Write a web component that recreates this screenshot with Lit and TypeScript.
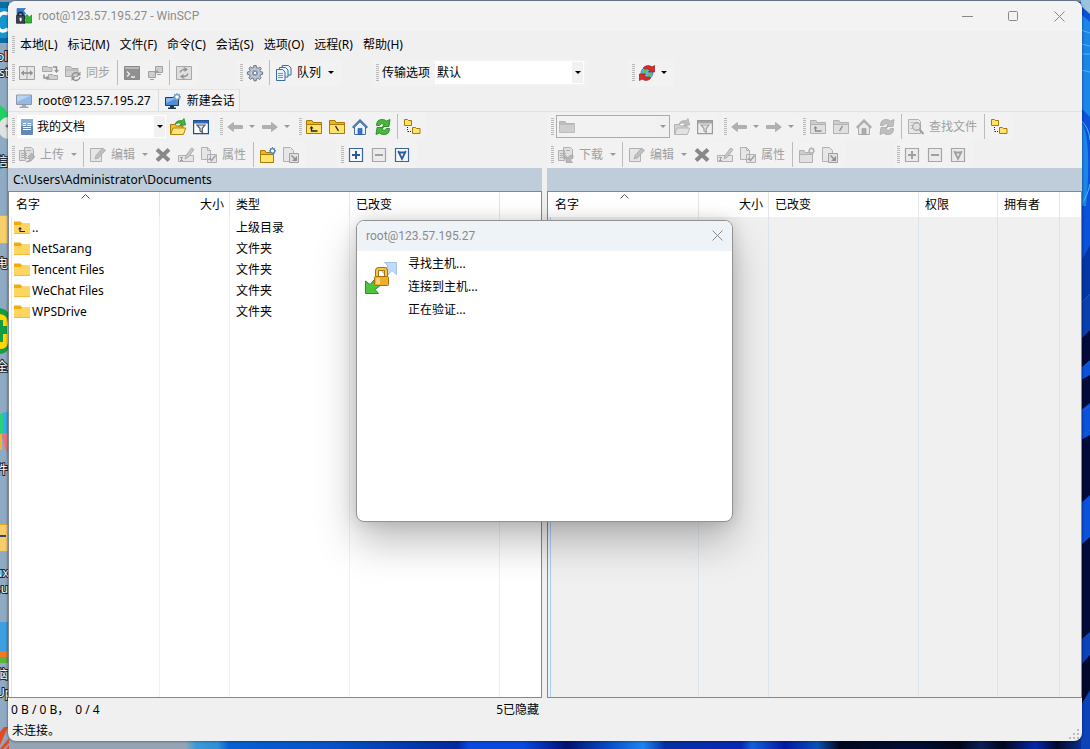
import { LitElement, html, css, svg, nothing } from "lit";
import { customElement, property } from "lit/decorators.js";

const shapes: Record<string, unknown> = {
  app: svg`<path fill="#2b7de0" stroke="#1c5fb5" stroke-width=".6" d="M1 .5h8.500L7.500 2.700 9.500 5.500 7.500 8 4.500 6 1 8z"/><path fill="#35b436" stroke="#167d1a" stroke-width=".7" d="M8 15h7.500V7L13.300 9.200 11 6.500 8 9.500 10.300 12z"/><path fill="none" stroke="#23293a" stroke-width="1.500" d="M2.200 8V6.500a2.300 2.300 0 0 1 4.600 0V8"/><rect x=".6" y="7.600" width="8" height="7.600" fill="#3a4356" stroke="#1c2333" stroke-width=".8"/><path fill="#fff" d="M3.600 9.800h2v1.400l-.4 2h-1.200l-.4-2z"/>`,
  columns: svg`<path fill="#eee" stroke="#555" d="M.5 1.500h15v13H.5zM8 1.500v13"/><path stroke="#333" stroke-width="1.600" d="M3 8h10"/><path fill="#333" d="M5 5.200v5.600L1.800 8zM11 5.200v5.600L14.200 8z"/>`,
  syncdirs: svg`<path fill="#bbb" stroke="#666" d="M.5 1.500h5l1 1H10v4H.500zM6.500 9.500h4l1 1h4v4h-9z"/><path fill="none" stroke="#333" stroke-width="1.500" d="M11 2h3.500v4M2 9.500V13h3"/><path fill="#333" d="M12 5h5l-2.500 3zM4.500 10.500v5L7.500 13z"/>`,
  syncgo: svg`<path fill="#bbb" stroke="#666" d="M.5 1.500h5l1.500 2h6v8H.500z"/><path stroke="#777" d="M1 5h12"/><path fill="none" stroke="#333" stroke-width="1.500" d="M7 11a4 4 0 0 1 7-2M15 12a4 4 0 0 1-7 2"/><path fill="#333" d="M15.500 6.500v4h-4zM6.500 16v-4h4z"/>`,
  console: svg`<path fill="#333" stroke="#222" d="M.5 1.500h15v13H.5z"/><path fill="#888" d="M1 2h14v2H1z"/><path fill="none" stroke="#fff" stroke-width="1.300" d="M3 6.500 5.500 9 3 11.500M7 12h4"/>`,
  putty: svg`<path fill="#bbb" stroke="#555" d="M8.500 1.500h7v6h-7zM1.500 6.500h7v6h-7zM10 9.500h4M3 14.500h4"/><path fill="#444" d="M12 3 7 8h2l-4 4 7-6h-2z"/>`,
  refreshbox: svg`<path fill="#ddd" stroke="#666" d="M.5 1.500h15v13H.5zM8 1.500v2M8 12.500v2"/><path fill="none" stroke="#444" stroke-width="1.500" d="M4 7.500q1-3 5-3M12 8.500q-1 3-5 3"/><path fill="#333" d="M8.500 2v5l3.500-2.500zM7.500 9v5L4 11.500z"/>`,
  gear: svg`<path fill="#b4c0cf" stroke="#5f6d80" stroke-width=".9" d="M6.800.6h2.400l.4 2 1.500.7L12.800 2l1.500 1.600-1.200 1.700.6 1.400 1.900.3v2.300l-2 .4-.6 1.500 1.200 1.700-1.600 1.600-1.700-1.200-1.400.6-.3 1.900H7l-.4-2-1.500-.6-1.700 1.200-1.600-1.600L3 11.100l-.6-1.400-2-.4V7l2-.4.7-1.500L1.900 3.400l1.600-1.600 1.700 1.200 1.300-.6z"/><circle cx="8" cy="8" r="3.700" fill="#8d9bae" stroke="#d9e0e8" stroke-width=".7"/><circle cx="8" cy="8" r="1.700" fill="#fff" stroke="#5f6d80" stroke-width=".6"/>`,
  queue: svg`<g fill="#e9f2fa" stroke="#3a6ea0"><path d="M6.500.500h6l2.500 2.500v7h-8.500z"/><path d="M3.500 2.500h6l2.500 2.500v7h-8.500z"/><path d="M.5 4.500h6L9 7v8.500H.500z"/></g><path stroke="#6d98c0" d="M2 8.500h5M2 10.500h5M2 12.500h5M6 .500v2"/>`,
  globe: svg`<circle cx="8" cy="8" r="6" fill="#5db5ea" stroke="#2b6ba5" stroke-width=".7"/><path fill="#68bf4b" d="M3.500 6q2-3 4.500-1l-1 3-2.500 1.500zM9 9l3.500-1.500L12 11l-2.500 1.500z"/><path fill="#dc2d2b" stroke="#8f1414" stroke-width=".7" d="M4.500 2.500Q8.500-1 13 2l2.500-1.500V7H9.500l1.700-1.800Q8.500 3 5.500 4z"/><path fill="#dc2d2b" stroke="#8f1414" stroke-width=".7" d="M11.500 13.500q-4 3.500-8.500.5L.5 15.500V9h6l-1.700 1.800Q7.500 13 10.500 12z"/>`,
  monitor: svg`<path fill="#92b9e8" stroke="#8d97a5" d="M.5 2h15v9.500H.5z"/><path fill="#b9d3f3" d="M1 2.500h14L1 9z"/><path fill="#a3a9b1" d="M6 12h4v1.500h2.500V15h-9v-1.500H6z"/>`,
  newmonitor: svg`<path fill="#4f8fd8" stroke="#26384e" d="M.5 4.500h13v8H.5z"/><path fill="#8cbaf0" d="M1 5h11L1 10z"/><path fill="#26384e" d="M5 13h4v1.500h2V16H3v-1.500h2z"/><circle cx="12" cy="4" r="2.400" fill="#fff" stroke="#6e9cc4" stroke-width="1.300"/><path stroke="#6e9cc4" stroke-width="1.300" d="M12 0v1.500M12 6.500V8M8 4h1.500M14.500 4H16M9.200 1.200l1 1M13.800 5.800l1 1M14.800 1.200l-1 1M10.200 5.800l-1 1"/>`,
  document: svg`<rect x="2" width="12" height="16" rx="1" fill="#6289b5"/><path fill="#8aaed2" d="M2 1q0-1 1-1h10q1 0 1 1v6H2z"/><path stroke="#fff" d="M4 4.500h3M4 6.500h3M8.500 4.500H12M8.500 6.500H12M4 8.500h8M4 10.500h8"/>`,
  openfolder: svg`<path fill="#efc22f" stroke="#a87905" d="M.5 15V5.500h5l1 1.500H13v8z"/><path fill="#ffe680" stroke="#b58409" d="M.7 15.500 3 9h12.800l-2.400 6.500z"/><path fill="#45b53f" stroke="#1f7f1c" stroke-width=".7" d="M5 5Q7 .800 12 1.800L14-.5 15.700 6 9.700 6.500 11.500 4.300Q8 3.300 5 5z"/>`,
  filter: svg`<path fill="#fff" stroke="#1d4e92" stroke-width="1.200" d="M.6 1.600h14.800v13H.6z"/><path fill="#2d67b5" d="M1 2h14v2.500H1z"/><path fill="#dfe7f0" stroke="#4a586c" stroke-width="1.200" d="M4 6h8L9.300 9.500v4L7 12V9.500z"/>`,
  back: svg`<path fill="#777" stroke="#666" stroke-width=".8" d="M.7 8 6.500 3.500V6.500h9v3h-9v3z"/>`,
  forward: svg`<path fill="#777" stroke="#666" stroke-width=".8" d="M15.300 8 9.500 3.500V6.500h-9v3h9v3z"/>`,
  folder: svg`<path fill="#888" stroke="#777" d="M.5 13V2.500H6l1 2h8.500V13z"/><path fill="#aaa" stroke="#888" d="M.5 5.500h15v8H.500z"/>`,
  upfolder: svg`<path fill="#e8b923" stroke="#a87905" d="M.5 14V1.500H6l1 2h8.500V14z"/><path fill="#ffe36b" stroke="#a87905" d="M.5 5.500h15v9H.500z"/><path fill="none" stroke="#222" stroke-width="1.300" d="M5.500 8v4h6"/><path fill="#222" d="M3.500 9.500 5.500 7 7.500 9.500z"/>`,
  rootfolder: svg`<path fill="#e8b923" stroke="#a87905" d="M.5 14V1.500H6l1 2h8.500V14z"/><path fill="#ffe36b" stroke="#a87905" d="M.5 5.500h15v9H.500z"/><path stroke="#222" stroke-width="1.400" d="m6.500 7 3 5"/>`,
  slashfolder: svg`<path fill="#e8b923" stroke="#a87905" d="M.5 14V1.500H6l1 2h8.500V14z"/><path fill="#ffe36b" stroke="#a87905" d="M.5 5.500h15v9H.500z"/><path stroke="#222" stroke-width="1.400" d="m9.500 7-3 5"/>`,
  home: svg`<path fill="#eaf2fb" stroke="#50709a" d="M2.500 7.500v8h11v-8L8 2z"/><path fill="#3277d8" stroke="#1d529f" stroke-width=".6" d="M6 9.500h4v6H6z"/><path fill="none" stroke="#2f5c96" stroke-width="2.200" d="M.8 8.800 8 1.600l7.200 7.200"/><path fill="none" stroke="#92b8e6" stroke-width=".7" d="M.8 8.800 8 1.600l7.200 7.200"/>`,
  refresh: svg`<path fill="#49b83c" stroke="#1f7d1c" stroke-width=".8" d="M1.500 6.500Q1.500.5 7 .5q3 0 4.500 1.500L15 .5 14 7.500H7.500l2-2Q6 3.500 4.500 6.500z"/><path fill="#49b83c" stroke="#1f7d1c" stroke-width=".8" d="M14.500 9.500q0 6-5.500 6-3 0-4.500-1.500L1 15.500l1-7h6.500l-2 2q3.500 2 5-1z"/>`,
  tree: svg`<path fill="#ffe36b" stroke="#a87905" d="M.5 6.500v-6h3l1 1h3v5zM8.500 14.500v-6h3l1 1h3.500v5z"/><path stroke="#222" stroke-dasharray="1 1" d="M3.500 8v4.500M4 12.500h4"/>`,
  transfer: svg`<path fill="#ddd" stroke="#777" d="M5.500.500h7l2 2v9h-9zM.5 3.500h6v10h-6z"/><path stroke="#777" d="M2 6.500h6M2 8.500h6M2 10.500h6M8 3.500h4"/><path fill="#888" stroke="#555" stroke-width=".7" d="M7 15q4-1 4-5H9l3.500-4L16 10h-2q0 5-7 5z"/>`,
  download: svg`<path fill="#ddd" stroke="#777" d="M5.500.500h7l2 2v9h-9zM.5 3.500h6v10h-6z"/><path stroke="#777" d="M2 6.500h6M2 8.500h6M2 10.500h6M8 3.500h4"/><path fill="#888" stroke="#555" stroke-width=".7" d="M15 8q-4 0-5 3L8 9v6.500h6.500L12.500 13q1-2 2.500-2z"/>`,
  edit: svg`<path fill="#eee" stroke="#777" d="M.5 1.500h11v13H.5z"/><path fill="#999" stroke="#666" stroke-width=".8" d="M5 12 6 8.500 12.500 1 15.500 3.300 8.500 11z"/>`,
  cross: svg`<path stroke="#222" stroke-width="4" d="m2 2.500 12 11M14 2.500l-12 11"/>`,
  rename: svg`<path fill="#eee" stroke="#777" d="M.5 8.500h15v6H.5z"/><path stroke="#555" d="M2 10.500h3M3.500 10.500v3M2 13.500h3"/><path fill="#aaa" stroke="#666" stroke-width=".8" d="M7 12 8 8.500 13.500 1 16 2.500 10.500 10z"/>`,
  props: svg`<path fill="#eee" stroke="#777" d="M.5.500h6l3 3v9h-9zM6.500.500v3h3M6.500 7.500h9v8h-9z"/><path fill="none" stroke="#555" stroke-width="1.500" d="m8.500 11 2 2.500 4-5"/>`,
  newfolder: svg`<path fill="#e8b923" stroke="#a87905" d="M.5 15V3.500H5l1 2h7.500V15z"/><path fill="#ffe36b" stroke="#a87905" d="M.5 7.500h13v8H.500z"/><circle cx="12.500" cy="3.800" r="2.200" fill="#fff" stroke="#5c86b5" stroke-width="1.200"/><path stroke="#5c86b5" stroke-width="1.200" d="M12.500 0v1.500M12.500 6v1.500M9 3.800h1.500M14.500 3.800H16M10 1.300l1 1M14 5.300l1 1M15 1.300l-1 1M11 5.300l-1 1"/>`,
  shortcut: svg`<path fill="#eee" stroke="#777" d="M.5.500h7l3 3v11H.5z"/><path fill="#ddd" stroke="#555" d="M6.500 6.500h9v9h-9z"/><path stroke="#333" stroke-width="1.500" d="m8.500 8.500 4 4"/><path fill="#333" d="M14 9v5H9z"/>`,
  plus: svg`<path fill="#f4f8fc" stroke="#39659c" stroke-width="1.200" d="M1.500 1.500h13v13h-13z"/><path stroke="#2f5b94" stroke-width="2" d="M4 8h8M8 4v8"/>`,
  minus: svg`<path fill="#f4f8fc" stroke="#39659c" stroke-width="1.200" d="M1.500 1.500h13v13h-13z"/><path stroke="#2f5b94" stroke-width="2" d="M4 8h8"/>`,
  invert: svg`<path fill="#f4f8fc" stroke="#39659c" stroke-width="1.200" d="M1.500 1.500h13v13h-13z"/><path fill="none" stroke="#2f5b94" stroke-width="1.800" d="M4.200 4 8 12l3.800-8M4.500 5.500h7"/>`,
  find: svg`<path fill="#eee" stroke="#777" d="M.5.500h10l2 2v12H.5z"/><path stroke="#999" d="M2.500 3.500h3M2.500 6.500h2M2.500 9.500h2"/><circle cx="8.500" cy="7.500" r="3.800" fill="#ddd" stroke="#555" stroke-width="1.200"/><path stroke="#555" stroke-width="2" d="m11.500 10.500 4 4.500"/>`,
  yellowfolder: svg`<path fill="#f0ab0c" d="M0 1.500h6.500L8 3.500h8v3H0z"/><path fill="#ffd562" d="M0 5h6.500L8 4H16V14H0z"/><path fill="#f4bb3c" d="M0 13h16v1H0z"/>`,
  yellowup: svg`<path fill="#f0ab0c" d="M0 1.500h6.500L8 3.500h8v3H0z"/><path fill="#ffd562" d="M0 5h6.500L8 4H16V14H0z"/><path fill="#f4bb3c" d="M0 13h16v1H0z"/><path fill="none" stroke="#222" stroke-width="1.100" d="M6 8v3.500h5"/><path fill="#222" d="M4 9.200 6 7l2 2.200z"/>`,
};

const icon = (name: string) =>
  html`<svg class="icon" viewBox="0 0 16 16" width="16" height="16" aria-hidden="true">${shapes[name]}</svg>`;

const grip = html`<span class="grip"></span>`;
const sep = html`<span class="sep"></span>`;
const caret = (off = false) =>
  html`<button class="caret" ?disabled=${off} aria-label="展开"><span class="tri"></span></button>`;
const tool = (name: string, off = false, label = "") =>
  html`<button class="tool" ?disabled=${off} aria-label=${label || name}>
    <span class="slot">${icon(name)}</span>${label ? html`<span class="label">${label}</span>` : nothing}
  </button>`;

const shared = css`
  * { box-sizing: border-box; }
  button, select {
    font: inherit; color: inherit; background: none; border: 0; margin: 0; padding: 0;
    appearance: none; border-radius: 0; outline: none;
  }
  .icon { display: block; overflow: visible; flex: none; }
  .bar { display: flex; height: 28px; padding-top: 1px; overflow: hidden; }
  .group { display: flex; align-items: center; height: 27px; padding: 0 4px; background: #f2f2f2; border-radius: 3px; flex: none; white-space: nowrap; }
  .grip { width: 3px; height: 17px; flex: none; background: repeating-linear-gradient(#b9b9b9 0 1px, transparent 1px 2px); }
  .sep { width: 1px; height: 25px; margin: 0 2px 0 3px; background: #bcbcbc; flex: none; }
  .tool { display: flex; align-items: center; height: 24px; flex: none; }
  .slot { width: 23px; display: grid; place-items: center; }
  .label { padding: 0 4px 0 2px; }
  .tool:disabled { color: #a0a0a0; }
  .tool:disabled .icon { filter: grayscale(1) brightness(0.92) opacity(0.5); }
  .caret { width: 12px; height: 24px; display: grid; place-items: center; flex: none; }
  .tri { border: 3px solid transparent; border-top-color: #000; border-bottom: 0; }
  .caret:disabled .tri, .off .tri { border-top-color: #9a9a9a; }
  .combo { display: grid; align-items: center; height: 23px; background: #fff; flex: none; margin-left: 2px; }
  .combo > * { grid-area: 1 / 1; }
  .combo select { width: 100%; height: 100%; padding: 0 14px 0 2px; }
  .combo.pic select { padding-left: 20px; }
  .combo .icon { margin-left: 2px; }
  .combo .drop { justify-self: end; width: 11px; height: 21px; margin-right: 1px; background: #f1f1f1; display: grid; place-items: center; pointer-events: none; }
  .combo.off { background: #f2f2f2; border: 1px solid #acacac; }
  .combo.off .icon { filter: grayscale(1) opacity(0.5); }
`;

interface Column { title: string; width?: number; right?: boolean; sorted?: boolean }
interface Row { icon: string; name: string; kind: string }

@customElement("file-panel")
class FilePanel extends LitElement {
  @property({ type: Boolean }) remote = false;
  @property() path = "";
  @property({ attribute: false }) columns: Column[] = [];
  @property({ attribute: false }) rows: Row[] = [];

  static styles = [shared, css`
    :host { display: flex; flex-direction: column; min-width: 0; min-height: 0; }
    .nav .group { padding: 0 3px; }
    .nav .group:first-child { padding-left: 4px; margin-right: 2px; }
    .place { width: 149px; }
    .place.off { width: 114px; }
    .extra { margin-left: 31px; }
    .remote .extra { margin-left: 48px; }
    .body { display: flex; flex-direction: column; flex: 1; min-height: 0; }
    .path { height: 23px; line-height: 23px; padding-left: 5px; background: #bfcddb; flex: none; font-size: 12px; }
    .list { flex: 1; border: 1px solid #828790; background: #fff; min-height: 0; overflow: hidden; }
    table { width: 100%; height: 100%; border-collapse: separate; border-spacing: 0; table-layout: fixed; }
    th { height: 25px; font-weight: 400; text-align: left; padding: 0 5px 0 6px; background: #fff; border-right: 1px solid #e5e5e5; position: relative; }
    th:last-child, td:last-child { border-right: 0; }
    th.right { text-align: right; }
    .sort { position: absolute; left: 50%; top: 2px; margin-left: -4px; }
    td { height: 21px; padding: 0 6px; border-right: 1px solid #edf2f8; white-space: nowrap; }
    th.first { padding-left: 5px; }
    th.gut, td.gut { padding: 0; border: 0; }
    td.gut + td { padding: 0 0 0 2px; border-left: 1px solid #dce6f4; }
    .fill td { height: auto; }
    .name { display: flex; align-items: center; gap: 2px; }
    .remote .list { background: #f0f0f0; }
    .remote td { border-right-color: #dde5ec; }
    .remote td.gut + td { border-left-color: #a9cdf5; }
  `];

  render() {
    const r = this.remote;
    return html`
      <div class="body ${r ? "remote" : ""}">
        <div class="bar nav">
          <div class="group">
            ${grip}
            <div class="combo pic place ${r ? "off" : ""}">
              <select aria-label="目录" ?disabled=${r}><option>${r ? "" : "我的文档"}</option></select>
              ${icon(r ? "folder" : "document")}
              <span class="drop"><span class="tri"></span></span>
            </div>
            ${tool("openfolder", r)}${tool("filter", r)}
          </div>
          <div class="group">${grip}${tool("back", true)}${caret(true)}${tool("forward", true)}${caret(true)}</div>
          <div class="group">
            ${grip}${tool("upfolder", r)}${tool(r ? "slashfolder" : "rootfolder", r)}${tool("home", r)}${tool("refresh", r)}
            ${r ? html`${sep}${tool("find", true, "查找文件")}` : nothing}
            ${sep}${tool("tree")}
          </div>
        </div>
        <div class="bar">
          <div class="group">
            ${grip}${tool(r ? "download" : "transfer", true, r ? "下载" : "上传")}${caret(true)}${sep}
            ${tool("edit", true, "编辑")}${caret(true)}
            ${tool("cross", true)}${tool("rename", true)}${tool("props", true, "属性")}${sep}
            ${tool("newfolder", r)}${tool("shortcut", true)}
          </div>
          <div class="group extra">${grip}${tool("plus", r)}${tool("minus", true)}${tool("invert", r)}</div>
        </div>
        <div class="path">${this.path}</div>
        <div class="list">
          <table>
            <colgroup>
              <col style="width:2px">
              ${this.columns.map((c) => html`<col style=${c.width ? `width:${c.width}px` : ""}>`)}
            </colgroup>
            <thead><tr>
              <th class="gut"></th>
              ${this.columns.map((c, i) => html`<th class="${c.right ? "right" : ""} ${i === 0 ? "first" : ""}">${c.title}
                ${c.sorted ? html`<svg class="sort" width="9" height="5" viewBox="0 0 9 5"><path d="M.5 4.500 4.500.500l4 4" fill="none" stroke="#555"/></svg>` : nothing}</th>`)}
            </tr></thead>
            <tbody>
              ${this.rows.map((row) => html`<tr>
                <td class="gut"></td>
                <td><span class="name">${icon(row.icon)}${row.name}</span></td>
                <td></td><td>${row.kind}</td><td></td><td></td>
              </tr>`)}
              <tr class="fill"><td class="gut"></td>${this.columns.map(() => html`<td></td>`)}</tr>
            </tbody>
          </table>
        </div>
      </div>`;
  }
}

@customElement("app-root")
class AppRoot extends LitElement {
  static styles = [shared, css`
    :host {
      display: block; height: 100vh; position: relative; overflow: hidden; color: #000;
      font: 12px/16px "Noto Sans", "Noto Sans CJK SC", sans-serif;
    }
    .desktop { position: absolute; inset: 0; background: linear-gradient(90deg, #8fabc4 0 50%, #0a4fd8 50%); }
    .edge { position: absolute; top: 0; }
    .edge.left { left: 0; }
    .edge.right { right: 0; }
    .floor { position: absolute; left: 0; right: 0; bottom: 0; height: 10px;
      background: linear-gradient(90deg, #93a4b6 0 17%, #3a9bd8 18%, #2f8ed6 20%, #0660d0 21%, #0654c6 30%, #042a9c 42%, #0a48e0 43%, #0a48e0 48%, #021070 52%, #0a50c8 56%, #1c84f0 59%, #0630a0 61%, #0828b4 68%, #1460d8 69%, #0418a0 72%, #0a50b8 75%, #02071f 77%, #030d34 84%, #02051a 88%, #0a2058 90%, #02061c 92%, #0628a8 95%, #02082c 97%, #0a3fb0); }
    .top { position: absolute; left: 0; right: 0; top: 0; height: 2px; background: #7f92a8; }
    .desk-text { font-size: 12px; fill: #fff; stroke: #1b2836; stroke-width: 2px; paint-order: stroke; }
    .frame { position: relative; height: 100%; padding: 1px 8px 8px; }
    .window { height: 100%; display: flex; flex-direction: column; background: #f0f0f0; border-radius: 8px; overflow: hidden; box-shadow: 0 0 3px rgba(0, 0, 0, 0.6); }
    .caption { display: flex; align-items: center; height: 30px; background: #f3f3f3; padding-left: 8px; color: #8c8c8c; flex: none; font-family: Roboto, sans-serif; }
    .caption .title { margin-left: 6px; flex: 1; }
    .sys { width: 46px; height: 28px; display: grid; place-items: center; }
    .menu { display: flex; align-items: center; height: 27px; padding-left: 4px; flex: none; }
    .menu nav { display: flex; gap: 10px; margin-left: 5px; }
    .main { height: 30px; flex: none; }
    .g-pref { margin-left: 37px; }
    .g-opt { margin-left: 31px; }
    .g-opt label { margin: 0 3px 0 3px; }
    .g-opt .combo { width: 149px; }
    .g-sync { margin-left: 40px; }
    .tabs { display: flex; height: 24px; padding: 1px 0 0 2px; border-bottom: 1px solid #e2e2e2; flex: none; }
    .tab { display: flex; align-items: center; gap: 6px; padding: 0 7px 0 6px; background: #f3f3f3; border-top: 1px solid #e3e3e3; border-right: 1px solid #dcdcdc; }
    .tab + .tab { padding-right: 4px; }
    .panels { flex: 1; min-height: 0; display: grid; grid-template-columns: minmax(0, 534fr) 5px minmax(0, 535fr); }
    .status { display: grid; grid-template-columns: minmax(0, 534fr) 5px minmax(0, 535fr); height: 21px; padding-top: 2px; align-items: center; flex: none; }
    .status .counts { display: flex; justify-content: space-between; padding: 0 3px; }
    .foot { display: flex; align-items: center; justify-content: space-between; height: 22px; padding: 2px 1px 0 4px; flex: none; }
    .foot svg { align-self: end; }
    .dialog {
      position: absolute; inset: 0 1px 8px 0; margin: auto; width: 377px; height: 302px; display: flex; flex-direction: column;
      padding: 0; border: 1px solid #929292; border-radius: 8px; background: #fff; overflow: hidden; color: inherit;
      box-shadow: 0 20px 40px rgba(0, 0, 0, 0.26), 0 0 16px rgba(0, 0, 0, 0.14);
    }
    .dialog header { display: flex; align-items: center; justify-content: space-between; height: 30px; background: #eef3f8; color: #8a8a8a; padding: 0 0 0 9px; font-family: Roboto, sans-serif; }
    .dialog header .sys { width: 30px; }
    .dialog .content { display: flex; gap: 11px; padding: 0 8px; }
    .dialog .content svg { margin-top: 11px; }
    ul { list-style: none; margin: 0; padding: 1px 0; line-height: 23px; }
  `];

  render() {
    const menus = ["本地(L)", "标记(M)", "文件(F)", "命令(C)", "会话(S)", "选项(O)", "远程(R)", "帮助(H)"];
    const left: Column[] = [
      { title: "名字", width: 149, sorted: true }, { title: "大小", width: 70, right: true },
      { title: "类型", width: 120 }, { title: "已改变", width: 150 }, { title: "" }];
    const right: Column[] = [
      { title: "名字", width: 149, sorted: true }, { title: "大小", width: 70, right: true },
      { title: "已改变", width: 150 }, { title: "权限", width: 79 }, { title: "拥有者", width: 62 }, { title: "" }];
    const rows: Row[] = [
      { icon: "yellowup", name: "..", kind: "上级目录" },
      ...["NetSarang", "Tencent Files", "WeChat Files", "WPSDrive"].map((name) => ({ icon: "yellowfolder", name, kind: "文件夹" })),
    ];
    return html`
      <div class="desktop" aria-hidden="true">
        <div class="top"></div>
        <div class="floor"></div>
        <svg class="edge left" width="9" height="749">
          <path fill="#0a6ea6" d="M0 2h9v41H0z"/><path fill="#1596cf" d="M0 8h8v30H0z"/><path fill="none" stroke="#fff" stroke-width="3.500" d="M8 14Q1 11-2 18M8 29Q1 34-2 27"/>
          <circle cx="-6" cy="118" r="14" fill="#22d061"/><circle cx="9" cy="128" r="11" fill="#dfe3e2"/><circle cx="7" cy="126" r="1.500" fill="#777"/>
          <path fill="#f7cf6b" stroke="#e6a92c" d="M-1 215.500h9v28h-9z"/>
          <path fill="#129c43" d="M0 308q9 2 9 8v30q-1 7-9 8z"/><path fill="#ffd800" d="M0 314q8 1 8 9v20q-1 6-8 6z"/><path fill="#129c43" d="M0 320h3v6h4v8H3v8H0z"/>
          <circle cx="8" cy="426" r="14" fill="#34aef0"/><path fill="#2bd07d" d="M0 414h3v20H0z"/><path fill="#f0737a" d="M2 433h7v22Q3 448 2 433z"/><path fill="#f2b23a" d="M0 434h2v16H0z"/>
          <path fill="#f5cd6d" stroke="#e7a51b" d="M-1 524.500h9v27h-9z"/><path fill="#34466d" d="M0 535h6v2H0z"/>
          <path fill="#3d9ee0" d="M0 622h8v30H0z"/><path fill="#ef7c22" d="M0 651h8v6H0z"/><path fill="#5cb53c" d="M0 657h8v6H0z"/>
          <path fill="#e8481f" d="M0 732 4 727h4L0 745zM12 741h8l-5 8h-9zM9 738v5l-6 6H0z"/>
          <g class="desk-text"><text x="-3" y="61">oll</text><text x="-1" y="77">st</text><text x="-4" y="166">信</text><text x="-4" y="268">电</text><text x="-4" y="371">全</text><text x="-4" y="474">件</text><text x="-5" y="577">ux</text><text x="-6" y="593">eu</text><text x="-4" y="679">脑</text><text x="-4" y="697">Up</text></g>
        </svg>
        <svg class="edge right" width="9" height="749" viewBox="0 0 9 749">
          <path fill="#0a51dc" d="M0 0h9v749H0z"/><path fill="#9bc3dd" d="M0 0h9v14L0 6z"/><path fill="#1b86ea" d="M0 14 9 22v95L0 108zM1 122q10 20 4 84l-4 0z"/>
          <path fill="none" stroke="#4fb6f5" d="M0 30l9 3M0 44l9 2M0 54h9M0 70l9 2M0 120q8 8 9 20M0 204q6-6 9-20M0 303l9-9"/>
          <path fill="none" stroke="#1c62d8" d="M0 369l9-8M0 412l9-6M0 436l9-6"/>
          <path fill="#0536a8" d="M0 262 9 245v49L0 303z"/><path fill="#0a3fb0" d="M0 303l9-9v36l-9 9z"/><path fill="#020b3a" d="M0 339 9 330v30L0 368zM0 380l9-5v28L0 410zM0 440l9-5v60L0 503zM0 545l9-8v95L0 640z"/><path fill="#0c43b8" d="M0 640 9 632v117H0z"/><path fill="#02092c" d="M0 665 9 655v35L0 705z"/>
        </svg>
      </div>
      <div class="frame">
        <main class="window">
          <header class="caption">
            ${icon("app")}<span class="title">root@123.57.195.27 - WinSCP</span>
            <button class="sys" aria-label="最小化"><svg width="11" height="11"><path d="M0 5.500h11" stroke="#888"/></svg></button>
            <button class="sys" aria-label="最大化"><svg width="11" height="11"><rect x=".5" y=".5" width="9" height="9" rx="1" fill="none" stroke="#888"/></svg></button>
            <button class="sys" aria-label="关闭"><svg width="11" height="11"><path d="m.5.500 10 10M10.500.500l-10 10" stroke="#888"/></svg></button>
          </header>
          <div class="menu">${grip}<nav>${menus.map((m) => html`<button>${m}</button>`)}</nav></div>
          <div class="bar main">
            <div class="group">
              ${grip}${tool("columns", true)}${tool("syncdirs", true)}${tool("syncgo", true, "同步")}${sep}
              ${tool("console", true)}${tool("putty", true)}${sep}${tool("refreshbox", true)}
            </div>
            <div class="group g-pref">${grip}${tool("gear")}${sep}${tool("queue", false, "队列")}${caret()}</div>
            <div class="group g-opt">
              ${grip}<label for="preset">传输选项</label>
              <div class="combo"><select id="preset"><option>默认</option></select><span class="drop"><span class="tri"></span></span></div>
            </div>
            <div class="group g-sync">${grip}${tool("globe")}${caret()}</div>
          </div>
          <div class="tabs">
            <button class="tab">${icon("monitor")}root@123.57.195.27</button>
            <button class="tab">${icon("newmonitor")}新建会话</button>
          </div>
          <div class="panels">
            <file-panel path="C:\\Users\\Administrator\\Documents" .columns=${left} .rows=${rows}></file-panel>
            <div></div>
            <file-panel remote .columns=${right}></file-panel>
          </div>
          <div class="status"><div class="counts"><span>0 B / 0 B，&ensp;0 / 4</span><span>5已隐藏</span></div></div>
          <div class="foot"><span>未连接。</span>
            <svg width="12" height="12"><path fill="#bbb" d="M8 0h2v2H8zM4 4h2v2H4zM8 4h2v2H8zM0 8h2v2H0zM4 8h2v2H4zM8 8h2v2H8z"/></svg>
          </div>
        </main>
      </div>
      <section class="dialog" role="dialog" aria-label="root@123.57.195.27">
        <header><span>root@123.57.195.27</span>
          <button class="sys" aria-label="关闭"><svg width="11" height="11"><path d="m.5.500 10 10M10.500.500l-10 10" stroke="#888"/></svg></button></header>
        <div class="content">
          <svg width="32" height="32" viewBox="0 0 32 32">
            <path fill="#c3daf7" stroke="#a3c2e6" d="M19.500.500h12v12L27 8.500l-5 5.500-5-4 6-6z"/>
            <path fill="#4cc53c" stroke="#24922a" d="M.5 31.500V19L5 22.500 10 17l6 6-6 4.500 3.500 4z"/>
            <path fill="none" stroke="#a87411" stroke-width="4" d="M12 15V9q0-2 2-2h5q2 0 2 2v6"/><path fill="none" stroke="#f4c747" stroke-width="2" d="M12 15V9q0-2 2-2h5q2 0 2 2v6"/>
            <rect x="9.500" y="14.500" width="14" height="9" rx="1" fill="#f0af2b" stroke="#a9700d"/><path fill="#ffd568" d="M11 16h4v6h-4z"/>
          </svg>
          <ul><li>寻找主机...</li><li>连接到主机...</li><li>正在验证...</li></ul>
        </div>
      </section>`;
  }
}
